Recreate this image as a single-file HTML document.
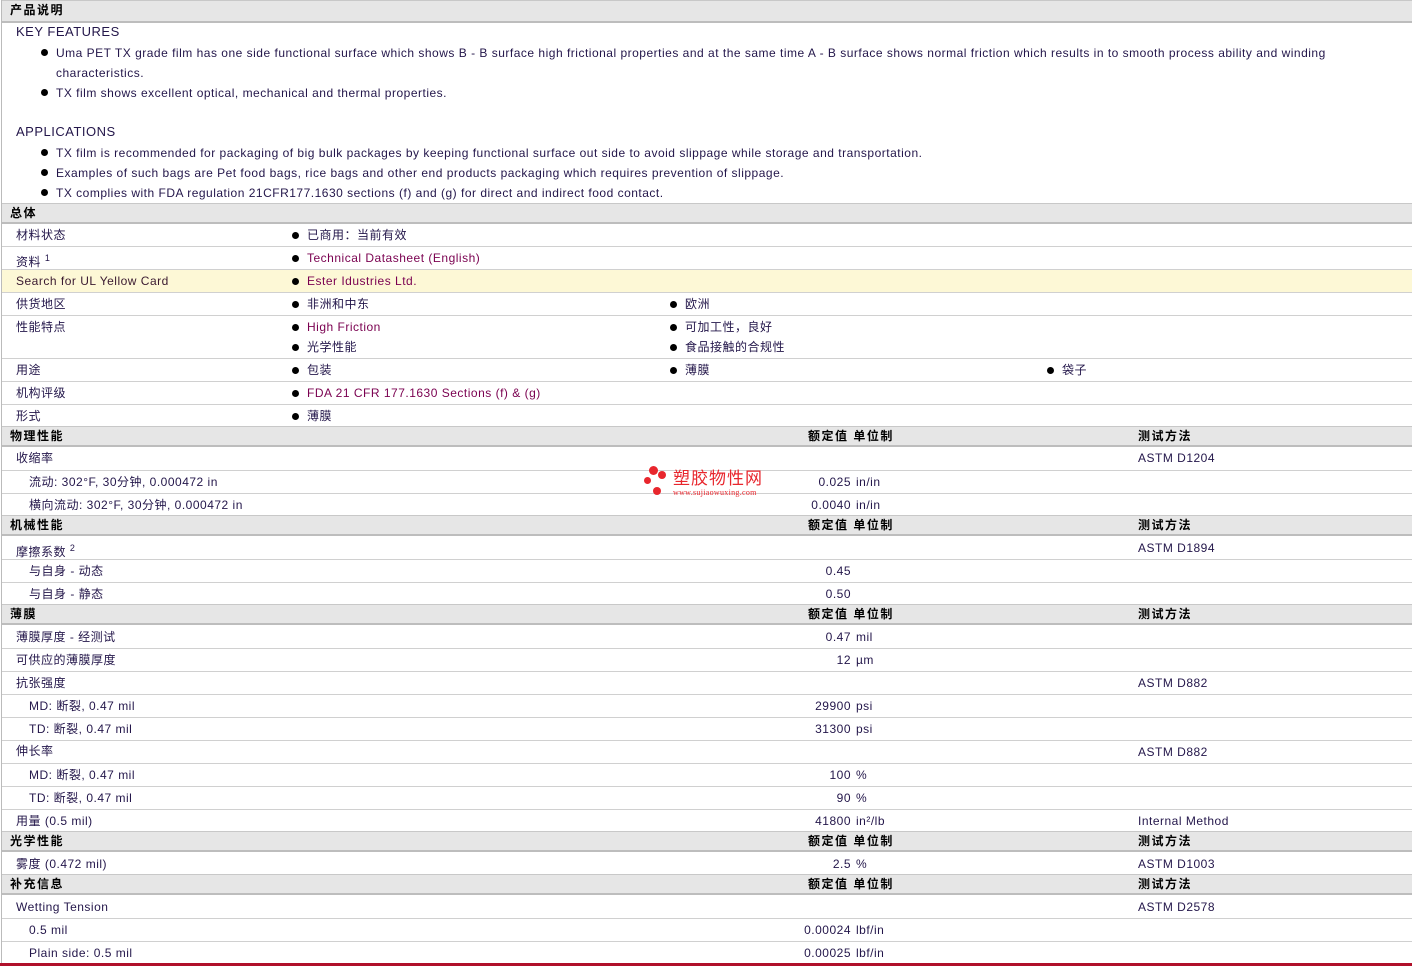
<!DOCTYPE html>
<html><head><meta charset="utf-8"><style>
body{margin:0;width:1412px;height:966px;position:relative;overflow:hidden;background:#fff;font-family:"Liberation Sans","Noto Sans CJK SC",sans-serif;font-size:12px;color:#23164a;letter-spacing:0.5px}
.t{position:absolute;line-height:14px;white-space:nowrap}
.b{font-weight:bold;color:#000;letter-spacing:1.5px}
.h{position:absolute;left:2px;right:0;background:#e6e6e6;border-top:1px solid #c8c8c8;border-bottom:2px solid #bdbdbd}
.l{position:absolute;left:2px;right:0;height:1px;background:#d0d0d0}
.d{position:absolute;width:7px;height:7px;border-radius:50%;background:#000}
.a{color:#7a0050}
.v{position:absolute;line-height:14px;text-align:right;width:200px;left:651px}
</style></head><body>
<div style="position:absolute;left:1px;top:0;bottom:0;width:1px;background:#bbb"></div>
<div class="h" style="top:0;height:20px"></div>
<div class="t b" style="left:10px;top:3px">产品说明</div>
<div class="t" style="left:16px;top:25px;font-size:13px">KEY FEATURES</div>
<div class="d" style="left:41px;top:49px"></div>
<div class="t" style="left:56px;top:46px">Uma PET TX grade film has one side functional surface which shows B - B surface high frictional properties and at the same time A - B surface shows normal friction which results in to smooth process ability and winding</div>
<div class="t" style="left:56px;top:66px">characteristics.</div>
<div class="d" style="left:41px;top:89px"></div>
<div class="t" style="left:56px;top:86px">TX film shows excellent optical, mechanical and thermal properties.</div>
<div class="t" style="left:16px;top:125px;font-size:13px">APPLICATIONS</div>
<div class="d" style="left:41px;top:149px"></div>
<div class="t" style="left:56px;top:146px">TX film is recommended for packaging of big bulk packages by keeping functional surface out side to avoid slippage while storage and transportation.</div>
<div class="d" style="left:41px;top:169px"></div>
<div class="t" style="left:56px;top:166px">Examples of such bags are Pet food bags, rice bags and other end products packaging which requires prevention of slippage.</div>
<div class="d" style="left:41px;top:189px"></div>
<div class="t" style="left:56px;top:186px">TX complies with FDA regulation 21CFR177.1630 sections (f) and (g) for direct and indirect food contact.</div>

<div class="h" style="top:203px;height:18px"></div>
<div class="t b" style="left:10px;top:206px">总体</div>
<div class="t" style="left:16px;top:228px">材料状态</div><div class="d" style="left:292px;top:232px"></div><div class="t" style="left:307px;top:228px">已商用：当前有效</div>
<div class="l" style="top:246px"></div>
<div class="t" style="left:16px;top:251px">资料 <sup style="font-size:9px">1</sup></div><div class="d" style="left:292px;top:255px"></div><div class="t a" style="left:307px;top:251px">Technical Datasheet (English)</div>
<div class="l" style="top:269px"></div>
<div style="position:absolute;left:2px;right:0;top:270px;height:22px;background:#fdf8d6"></div>
<div class="t a" style="left:16px;top:274px;color:#3a1a30">Search for UL Yellow Card</div><div class="d" style="left:292px;top:278px"></div><div class="t a" style="left:307px;top:274px">Ester Idustries Ltd.</div>
<div class="l" style="top:292px"></div>
<div class="t" style="left:16px;top:297px">供货地区</div><div class="d" style="left:292px;top:301px"></div><div class="t" style="left:307px;top:297px">非洲和中东</div><div class="d" style="left:670px;top:301px"></div><div class="t" style="left:685px;top:297px">欧洲</div>
<div class="l" style="top:315px"></div>
<div class="t" style="left:16px;top:320px">性能特点</div>
<div class="d" style="left:292px;top:324px"></div><div class="t a" style="left:307px;top:320px">High Friction</div><div class="d" style="left:670px;top:324px"></div><div class="t" style="left:685px;top:320px">可加工性，良好</div>
<div class="d" style="left:292px;top:344px"></div><div class="t" style="left:307px;top:340px">光学性能</div><div class="d" style="left:670px;top:344px"></div><div class="t" style="left:685px;top:340px">食品接触的合规性</div>
<div class="l" style="top:358px"></div>
<div class="t" style="left:16px;top:363px">用途</div><div class="d" style="left:292px;top:367px"></div><div class="t" style="left:307px;top:363px">包装</div><div class="d" style="left:670px;top:367px"></div><div class="t" style="left:685px;top:363px">薄膜</div><div class="d" style="left:1047px;top:367px"></div><div class="t" style="left:1062px;top:363px">袋子</div>
<div class="l" style="top:381px"></div>
<div class="t" style="left:16px;top:386px">机构评级</div><div class="d" style="left:292px;top:390px"></div><div class="t a" style="left:307px;top:386px">FDA 21 CFR 177.1630 Sections (f) &amp; (g)</div>
<div class="l" style="top:404px"></div>
<div class="t" style="left:16px;top:409px">形式</div><div class="d" style="left:292px;top:413px"></div><div class="t" style="left:307px;top:409px">薄膜</div>

<div class="h" style="top:426px;height:18px"></div>
<div class="t b" style="left:10px;top:429px">物理性能</div><div class="t b" style="left:808px;top:429px">额定值 单位制</div><div class="t b" style="left:1138px;top:429px">测试方法</div>
<div class="t" style="left:16px;top:451px">收缩率</div><div class="t" style="left:1138px;top:451px">ASTM D1204</div>
<div class="l" style="top:470px"></div>
<div class="t" style="left:29px;top:475px">流动: 302°F, 30分钟, 0.000472 in</div><div class="v" style="top:475px">0.025</div><div class="t" style="left:856px;top:475px">in/in</div>
<div class="l" style="top:493px"></div>
<div class="t" style="left:29px;top:498px">横向流动: 302°F, 30分钟, 0.000472 in</div><div class="v" style="top:498px">0.0040</div><div class="t" style="left:856px;top:498px">in/in</div>
<div style="position:absolute;left:644px;top:466px;width:30px;height:32px">
<div class="d" style="left:5px;top:0;width:9px;height:9px;background:#e8262d"></div><div class="d" style="left:14px;top:5px;width:8px;height:8px;background:#e8262d"></div><div class="d" style="left:0;top:11px;width:7px;height:7px;background:#e8262d"></div><div class="d" style="left:9px;top:21px;width:8px;height:8px;background:#e8262d"></div></div>
<div class="t" style="left:673px;top:470px;font-size:17px;line-height:18px;color:#e8262d;letter-spacing:1px">塑胶物性网</div>
<div class="t" style="left:673px;top:488px;font-size:8px;line-height:9px;color:#e8262d;font-family:'Liberation Serif',serif;letter-spacing:0.3px">www.sujiaowuxing.com</div>

<div class="h" style="top:515px;height:18px"></div>
<div class="t b" style="left:10px;top:518px">机械性能</div><div class="t b" style="left:808px;top:518px">额定值 单位制</div><div class="t b" style="left:1138px;top:518px">测试方法</div>
<div class="t" style="left:16px;top:541px">摩擦系数 <sup style="font-size:9px">2</sup></div><div class="t" style="left:1138px;top:541px">ASTM D1894</div>
<div class="l" style="top:559px"></div>
<div class="t" style="left:29px;top:564px">与自身 - 动态</div><div class="v" style="top:564px">0.45</div>
<div class="l" style="top:582px"></div>
<div class="t" style="left:29px;top:587px">与自身 - 静态</div><div class="v" style="top:587px">0.50</div>

<div class="h" style="top:604px;height:18px"></div>
<div class="t b" style="left:10px;top:607px">薄膜</div><div class="t b" style="left:808px;top:607px">额定值 单位制</div><div class="t b" style="left:1138px;top:607px">测试方法</div>
<div class="t" style="left:16px;top:630px">薄膜厚度 - 经测试</div><div class="v" style="top:630px">0.47</div><div class="t" style="left:856px;top:630px">mil</div>
<div class="l" style="top:648px"></div>
<div class="t" style="left:16px;top:653px">可供应的薄膜厚度</div><div class="v" style="top:653px">12</div><div class="t" style="left:856px;top:653px">µm</div>
<div class="l" style="top:671px"></div>
<div class="t" style="left:16px;top:676px">抗张强度</div><div class="t" style="left:1138px;top:676px">ASTM D882</div>
<div class="l" style="top:694px"></div>
<div class="t" style="left:29px;top:699px">MD: 断裂, 0.47 mil</div><div class="v" style="top:699px">29900</div><div class="t" style="left:856px;top:699px">psi</div>
<div class="l" style="top:717px"></div>
<div class="t" style="left:29px;top:722px">TD: 断裂, 0.47 mil</div><div class="v" style="top:722px">31300</div><div class="t" style="left:856px;top:722px">psi</div>
<div class="l" style="top:740px"></div>
<div class="t" style="left:16px;top:744px">伸长率</div><div class="t" style="left:1138px;top:745px">ASTM D882</div>
<div class="l" style="top:763px"></div>
<div class="t" style="left:29px;top:768px">MD: 断裂, 0.47 mil</div><div class="v" style="top:768px">100</div><div class="t" style="left:856px;top:768px">%</div>
<div class="l" style="top:786px"></div>
<div class="t" style="left:29px;top:791px">TD: 断裂, 0.47 mil</div><div class="v" style="top:791px">90</div><div class="t" style="left:856px;top:791px">%</div>
<div class="l" style="top:809px"></div>
<div class="t" style="left:16px;top:814px">用量 (0.5 mil)</div><div class="v" style="top:814px">41800</div><div class="t" style="left:856px;top:814px">in²/lb</div><div class="t" style="left:1138px;top:814px">Internal Method</div>

<div class="h" style="top:831px;height:18px"></div>
<div class="t b" style="left:10px;top:834px">光学性能</div><div class="t b" style="left:808px;top:834px">额定值 单位制</div><div class="t b" style="left:1138px;top:834px">测试方法</div>
<div class="t" style="left:16px;top:857px">雾度 (0.472 mil)</div><div class="v" style="top:857px">2.5</div><div class="t" style="left:856px;top:857px">%</div><div class="t" style="left:1138px;top:857px">ASTM D1003</div>

<div class="h" style="top:874px;height:18px"></div>
<div class="t b" style="left:10px;top:877px">补充信息</div><div class="t b" style="left:808px;top:877px">额定值 单位制</div><div class="t b" style="left:1138px;top:877px">测试方法</div>
<div class="t" style="left:16px;top:900px">Wetting Tension</div><div class="t" style="left:1138px;top:900px">ASTM D2578</div>
<div class="l" style="top:918px"></div>
<div class="t" style="left:29px;top:923px">0.5 mil</div><div class="v" style="top:923px">0.00024</div><div class="t" style="left:856px;top:923px">lbf/in</div>
<div class="l" style="top:941px"></div>
<div class="t" style="left:29px;top:946px">Plain side: 0.5 mil</div><div class="v" style="top:946px">0.00025</div><div class="t" style="left:856px;top:946px">lbf/in</div>
<div style="position:absolute;left:0;right:0;top:963px;height:3px;background:#b0102a"></div>
</body></html>
